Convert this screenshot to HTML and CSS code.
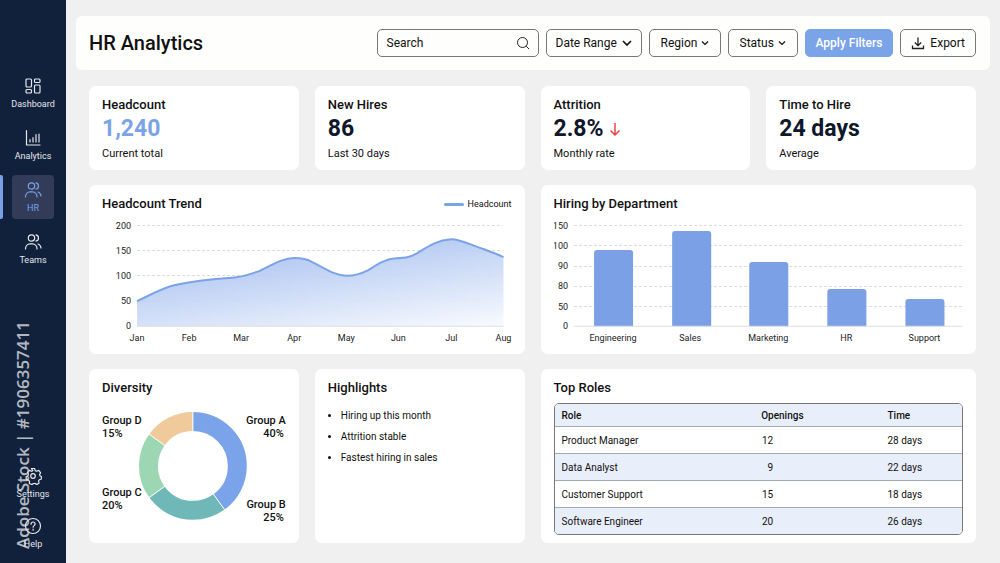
FILE: index.html
```html
<!DOCTYPE html>
<html lang="en">
<head>
  <meta charset="UTF-8">
  <meta name="viewport" content="width=device-width, initial-scale=1.0">
  <title>HR Analytics</title>
  <link rel="stylesheet" href="styles.css">
</head>
<body>
  <!-- Sidebar -->
  <nav class="sidebar">
    <a class="nav-item" href="#dashboard">
      <svg class="nav-icon" viewBox="0 0 18 18"><rect x="2" y="2" width="5.5" height="8" rx="1"/><rect x="2" y="12.5" width="5.5" height="3.5" rx="1"/><rect x="10.5" y="2" width="5.5" height="3.5" rx="1"/><rect x="10.5" y="8" width="5.5" height="8" rx="1"/></svg>
      <span>Dashboard</span>
    </a>
    <a class="nav-item" href="#analytics">
      <svg class="nav-icon" viewBox="0 0 18 18"><path d="M2.5 1.5V16H16M6 13v-2.5M9 13V8.5M12 13V5.5M15 13V5"/></svg>
      <span>Analytics</span>
    </a>
    <a class="nav-item active" href="#hr">
      <svg class="nav-icon" viewBox="0 0 18 18"><circle cx="7.5" cy="5" r="3.2"/><path d="M1.5 16c0-3 2-5.2 4.500-5.200h2.500c2.500 0 4.500 2.200 4.500 5.200M12 1.800a3.300 3.300 0 0 1 0 6.400M14 11c1.800.6 2.800 2 3 4"/></svg>
      <span>HR</span>
    </a>
    <a class="nav-item" href="#teams">
      <svg class="nav-icon" viewBox="0 0 18 18"><circle cx="7.5" cy="5" r="3.2"/><path d="M1.5 16c0-3 2-5.2 4.500-5.200h2.500c2.500 0 4.500 2.200 4.500 5.200M12 1.800a3.300 3.300 0 0 1 0 6.400M14 11c1.800.6 2.800 2 3 4"/></svg>
      <span>Teams</span>
    </a>
    <div class="nav-bottom">
      <a class="nav-item" href="#settings">
        <svg class="nav-icon" viewBox="0 0 18 18"><circle cx="9" cy="9" r="2.3"/><path d="M7.400 1.500h3.200l.6 2.100 1.500.7 2-.9 1.900 2.200-1 1.900.5 1.500 1.400.5-.3 2.700-2 .6-.7 1.300.6 2-2.300 1.500-1.700-1.200-1.600.1-1.500 1.100-2.700-1.100.2-2.100-1-1.300-2.200-.4-.2-2.800 1.900-1 .4-1.500-.9-2 2.100-2 1.900.9 1.300-.7z"/></svg>
        <span>Settings</span>
      </a>
      <a class="nav-item" href="#help">
        <svg class="nav-icon" viewBox="0 0 18 18"><circle cx="9" cy="9" r="7.500"/><path d="M7 7.200C7 5.800 7.900 5 9.100 5s2 .8 2 2c0 1.500-2 1.700-2 3.200M9.100 12.200v1"/></svg>
        <span>Help</span>
      </a>
    </div>
    <span class="stock-tag">Adobe Stock | #1906357411</span>
  </nav>

  <main class="main">
    <!-- Header and filters -->
    <header class="topbar">
      <h1>HR Analytics</h1>
      <div class="filters">
        <div class="search-box">
          <input type="text" class="search-input" placeholder="Search" aria-label="Search">
          <svg class="search-icon" viewBox="0 0 14 14"><circle cx="6.500" cy="6.500" r="5"/><path d="M10.200 10.200L13 13"/></svg>
        </div>
        <select class="filter-select filter-date" aria-label="Date Range"><option>Date Range</option></select>
        <select class="filter-select" aria-label="Region"><option>Region</option></select>
        <select class="filter-select" aria-label="Status"><option>Status</option></select>
        <button class="apply-button">Apply Filters</button>
        <button class="export-button">
          <svg class="export-icon" viewBox="0 0 14 14"><path d="M7 1.500v8M3.800 6.500L7 9.700l3.200-3.200M1.500 9.500v3h11v-3"/></svg>
          Export
        </button>
      </div>
    </header>

    <div class="grid">
      <!-- KPI cards -->
      <section class="card kpi">
        <h2>Headcount</h2>
        <p class="kpi-value kpi-blue">1,240</p>
        <p class="kpi-note">Current total</p>
      </section>
      <section class="card kpi">
        <h2>New Hires</h2>
        <p class="kpi-value">86</p>
        <p class="kpi-note">Last 30 days</p>
      </section>
      <section class="card kpi">
        <h2>Attrition</h2>
        <p class="kpi-value">2.8% <svg class="down-icon" viewBox="0 0 12 14"><path d="M6 1v12M1.500 8.500L6 13l4.500-4.500"/></svg></p>
        <p class="kpi-note">Monthly rate</p>
      </section>
      <section class="card kpi">
        <h2>Time to Hire</h2>
        <p class="kpi-value">24 days</p>
        <p class="kpi-note">Average</p>
      </section>

      <!-- Headcount trend -->
      <section class="card wide">
        <div class="card-head">
          <h2>Headcount Trend</h2>
          <span class="legend">Headcount</span>
        </div>
        <svg class="chart" viewBox="0 0 409 132">
          <defs>
            <linearGradient id="areaFill" x1="0.3" y1="0.1" x2="0.9" y2="1.1">
              <stop offset="0" stop-color="#a3bdef"/>
              <stop offset="1" stop-color="#fafcff"/>
            </linearGradient>
          </defs>
          <path class="grid-line" d="M35 11H401M35 36H401M35 61H401M35 86H401"/>
          <path fill="url(#areaFill)" fill-opacity="0.9" d="M35 87C48 81 60 74 73 71C92 67 112 65 126 64C136 63.500 146 61 157 57C170 51 180 44 192 44C198 44 204 44.500 210 48C222 54 231 61 244 61.700C253 62 260 59 266 56C274 51 282 45 294 44.300C304 44 308 43 315 39C326 32 335 26 349 25.300C357 25 371 32 381 35C388 38 395 40 401 43V112H35Z"/>
          <path class="trend-line" d="M35 87C48 81 60 74 73 71C92 67 112 65 126 64C136 63.500 146 61 157 57C170 51 180 44 192 44C198 44 204 44.500 210 48C222 54 231 61 244 61.700C253 62 260 59 266 56C274 51 282 45 294 44.300C304 44 308 43 315 39C326 32 335 26 349 25.300C357 25 371 32 381 35C388 38 395 40 401 43"/>
          <path class="base-line" d="M35 112H401"/>
          <g class="axis-y">
            <text x="29" y="15">200</text>
            <text x="29" y="40">150</text>
            <text x="29" y="65">100</text>
            <text x="29" y="90">50</text>
            <text x="29" y="115">0</text>
          </g>
          <g class="axis-x">
            <text x="35" y="127">Jan</text>
            <text x="87" y="127">Feb</text>
            <text x="139" y="127">Mar</text>
            <text x="192" y="127">Apr</text>
            <text x="244" y="127">May</text>
            <text x="296" y="127">Jun</text>
            <text x="349" y="127">Jul</text>
            <text x="401" y="127">Aug</text>
          </g>
        </svg>
      </section>

      <!-- Hiring by department -->
      <section class="card wide">
        <div class="card-head">
          <h2>Hiring by Department</h2>
        </div>
        <svg class="chart" viewBox="0 0 409 132">
          <path class="grid-line" d="M20 11H408M20 31H408M20 52H408M20 72H408M20 92H408"/>
          <g class="bars">
            <path d="M40 112V39q0-3 3-3h33q3 0 3 3v73z"/>
            <path d="M118 112V20q0-3 3-3h33q3 0 3 3v92z"/>
            <path d="M195 112V51q0-3 3-3h33q3 0 3 3v61z"/>
            <path d="M273 112V78q0-3 3-3h33q3 0 3 3v34z"/>
            <path d="M351 112V88q0-3 3-3h33q3 0 3 3v24z"/>
          </g>
          <path class="base-line" d="M20 112H408"/>
          <g class="axis-y">
            <text x="14" y="15">150</text>
            <text x="14" y="35">100</text>
            <text x="14" y="55">90</text>
            <text x="14" y="75">80</text>
            <text x="14" y="96">50</text>
            <text x="14" y="115">0</text>
          </g>
          <g class="axis-x">
            <text x="59" y="127">Engineering</text>
            <text x="136" y="127">Sales</text>
            <text x="214" y="127">Marketing</text>
            <text x="292" y="127">HR</text>
            <text x="370" y="127">Support</text>
          </g>
        </svg>
      </section>

      <!-- Diversity -->
      <section class="card">
        <h2>Diversity</h2>
        <svg class="donut" viewBox="0 0 184 124">
          <g class="slices" transform="rotate(-90 91 62)">
            <circle class="slice-a" cx="91" cy="62" r="44.500" pathLength="100" stroke-dasharray="40 60"/>
            <circle class="slice-b" cx="91" cy="62" r="44.500" pathLength="100" stroke-dasharray="25 75" stroke-dashoffset="-40"/>
            <circle class="slice-c" cx="91" cy="62" r="44.500" pathLength="100" stroke-dasharray="20 80" stroke-dashoffset="-65"/>
            <circle class="slice-d" cx="91" cy="62" r="44.500" pathLength="100" stroke-dasharray="15 85" stroke-dashoffset="-85"/>
          </g>
          <path class="slice-gap" d="M91 62V7M91 62L123.300 106.500M91 62L46.500 94.300M91 62L46.500 29.700"/>
          <g class="slice-label">
            <text x="0" y="20">Group D</text>
            <text x="0" y="33">15%</text>
            <text x="0" y="92">Group C</text>
            <text x="0" y="105">20%</text>
          </g>
          <g class="slice-label slice-label-right">
            <text x="184" y="20">Group A</text>
            <text x="182" y="33">40%</text>
            <text x="184" y="104">Group B</text>
            <text x="182" y="117">25%</text>
          </g>
        </svg>
      </section>

      <!-- Highlights -->
      <section class="card">
        <h2>Highlights</h2>
        <ul class="highlights">
          <li>Hiring up this month</li>
          <li>Attrition stable</li>
          <li>Fastest hiring in sales</li>
        </ul>
      </section>

      <!-- Top roles -->
      <section class="card wide">
        <h2>Top Roles</h2>
        <table class="roles">
          <thead>
            <tr><th class="col-role">Role</th><th class="col-openings">Openings</th><th>Time</th></tr>
          </thead>
          <tbody>
            <tr><td>Product Manager</td><td><span class="count">12</span></td><td>28 days</td></tr>
            <tr><td>Data Analyst</td><td><span class="count">9</span></td><td>22 days</td></tr>
            <tr><td>Customer Support</td><td><span class="count">15</span></td><td>18 days</td></tr>
            <tr><td>Software Engineer</td><td><span class="count">20</span></td><td>26 days</td></tr>
          </tbody>
        </table>
      </section>
    </div>
  </main>
</body>
</html>
```
FILE: styles.css
```css
/* General Styles */
* {
  box-sizing: border-box;
}

body {
  display: flex;
  min-height: 100vh;
  margin: 0;
  background-color: #f0f0f0;
  color: #111111;
  font-family: Roboto, Arial, sans-serif;
  font-size: 11px;
}

h1, h2, p, ul {
  margin: 0;
}

h1 {
  font-size: 20px;
  font-weight: 500;
}

h2 {
  font-size: 13px;
  line-height: 14px;
  font-weight: 500;
}

/* Sidebar */
.sidebar {
  position: relative;
  display: flex;
  flex-direction: column;
  align-items: center;
  gap: 8px;
  flex: none;
  width: 66px;
  padding: 71px 0 8px;
  background-color: #11213c;
}

.nav-item {
  display: flex;
  flex-direction: column;
  align-items: center;
  gap: 3px;
  min-width: 42px;
  height: 44px;
  padding-top: 6px;
  border-radius: 4px;
  color: #e4e7ec;
  font-size: 9px;
  line-height: 12px;
  text-decoration: none;
}

.nav-item.active {
  background-color: #323c58;
  color: #7ba0e8;
}

/* Marker on the window edge beside the active item */
.nav-item.active::before {
  content: "";
  position: absolute;
  left: 0;
  width: 3px;
  height: 44px;
  margin-top: -6px;
  background-color: #7ba0e8;
  border-radius: 0 2px 2px 0;
}

.nav-icon {
  width: 18px;
  height: 18px;
  fill: none;
  stroke: currentColor;
  stroke-width: 1.2;
  stroke-linecap: round;
  stroke-linejoin: round;
}

.nav-bottom {
  display: flex;
  flex-direction: column;
  gap: 6px;
  margin-top: auto;
}

.stock-tag {
  position: absolute;
  left: 12px;
  bottom: 14px;
  color: rgba(225, 227, 230, 0.8);
  font-family: "Open Sans", "Noto Sans", sans-serif;
  font-size: 17px;
  font-weight: 600;
  line-height: 22px;
  white-space: nowrap;
  writing-mode: vertical-rl;
  transform: rotate(180deg);
  pointer-events: none;
}

/* Header */
.main {
  flex: 1;
  min-width: 0;
  padding: 16px 10px 16px;
}

.topbar {
  display: flex;
  align-items: center;
  justify-content: space-between;
  padding: 13px 14px 13px 13px;
  background-color: #fefefc;
  border-radius: 6px;
}

.filters {
  display: flex;
  gap: 7px;
}

.search-box,
.filter-select,
.export-button,
.apply-button {
  height: 28px;
  border: 1px solid #777777;
  border-radius: 5px;
  background-color: #fefefc;
  color: #111111;
  font-family: inherit;
  font-size: 12px;
}

.search-box {
  display: flex;
  align-items: center;
  width: 162px;
  padding: 0 8px 0 9px;
}

.search-input {
  flex: 1;
  min-width: 0;
  padding: 0;
  border: none;
  outline: none;
  background: none;
  font: inherit;
}

.search-input::placeholder {
  color: #111111;
}

.search-icon,
.export-icon {
  width: 14px;
  height: 14px;
  fill: none;
  stroke: #222222;
}

.export-icon {
  stroke-width: 1.3;
}

.filter-select {
  appearance: none;
  padding: 0 22px 0 11px;
  background-image: url("data:image/svg+xml,%3Csvg xmlns='http://www.w3.org/2000/svg' width='8' height='8' fill='none' stroke='%23111' stroke-width='1.2'%3E%3Cpath d='M1 2.500l3 3 3-3'/%3E%3C/svg%3E");
  background-repeat: no-repeat;
  background-position: right 11px center;
}

.filter-date {
  padding: 0 23px 0 9px;
  background-image: url("data:image/svg+xml,%3Csvg xmlns='http://www.w3.org/2000/svg' width='10' height='8' fill='none' stroke='%23111' stroke-width='1.600'%3E%3Cpath d='M1 2l4 4 4-4'/%3E%3C/svg%3E");
  background-position: right 9px center;
}

.apply-button {
  padding: 0 10px;
  border-color: #7ba3e8;
  background-color: #7ba3e8;
  color: #ffffff;
  font-weight: 500;
  cursor: pointer;
}

.export-button {
  display: flex;
  align-items: center;
  gap: 5px;
  padding: 0 10px;
  cursor: pointer;
}

/* Cards */
.grid {
  display: grid;
  grid-template-columns: repeat(4, 1fr);
  gap: 15px 16px;
  padding: 16px 14px 0 13px;
}

.card {
  min-width: 0;
  padding: 12px 13px 8px;
  background-color: #ffffff;
  border-radius: 7px;
}

.wide {
  grid-column: span 2;
}

.card-head {
  display: flex;
  align-items: center;
  justify-content: space-between;
}

.kpi {
  padding-bottom: 9px;
}

.kpi-value {
  margin: 3px 0 4px;
  color: #0f172a;
  font-size: 23px;
  font-weight: 700;
  line-height: 28px;
}

.kpi-blue {
  color: #7ba3e8;
}

.kpi-note {
  line-height: 14px;
}

.down-icon {
  width: 12px;
  height: 14px;
  fill: none;
  stroke: #ef4444;
  stroke-width: 1.5;
}

/* Charts */
.legend {
  display: flex;
  align-items: center;
  gap: 4px;
  font-size: 9px;
}

.legend::before {
  content: "";
  width: 20px;
  height: 3px;
  border-radius: 2px;
  background-color: #7ba3e8;
}

.chart {
  display: block;
  width: 100%;
  margin-top: 3px;
}

.chart text {
  fill: #222222;
  font-size: 9px;
}

.axis-y {
  text-anchor: end;
}

.axis-x {
  text-anchor: middle;
}

.grid-line {
  stroke: #dddddd;
  stroke-dasharray: 3 2;
  shape-rendering: crispEdges;
}

.base-line {
  stroke: #dcdee2;
}

.trend-line {
  fill: none;
  stroke: #7ba3e8;
  stroke-width: 2;
}

.bars {
  fill: #7ba0e6;
}

.donut {
  display: block;
  width: 100%;
  margin: 9px 0 5px;
}

.slices circle {
  fill: none;
  stroke-width: 19;
}

.slices .slice-a {
  stroke: #7ba3e9;
}

.slices .slice-b {
  stroke: #70b8b7;
}

.slices .slice-c {
  stroke: #9dd6b2;
}

.slices .slice-d {
  stroke: #f0ca9a;
}

.slice-gap {
  stroke: #ffffff;
}

.slice-label {
  font-size: 11px;
  font-weight: 500;
  fill: #111111;
}

.slice-label-right {
  text-anchor: end;
}

/* Highlights */
.highlights {
  margin-top: 10px;
  padding-left: 13px;
  font-size: 10px;
  line-height: 21px;
}

/* Top Roles Table */
.roles {
  width: 100%;
  margin-top: 8px;
  border: 1px solid #777777;
  border-radius: 5px;
  border-spacing: 0;
  table-layout: fixed;
  overflow: hidden;
}

.roles th,
.roles td {
  height: 27px;
  padding: 0 7px;
  font-size: 10px;
  text-align: left;
}

.roles th {
  height: 22px;
  font-weight: 500;
  background-color: #e9eefb;
}

.roles td {
  border-top: 1px solid #a4a9b8;
}

.roles tbody tr:nth-child(even) {
  background-color: #e9eefb;
}

.col-role {
  width: 49%;
}

.col-openings {
  width: 31%;
}

/* Keeps one and two digit counts aligned on the right */
.count {
  display: inline-block;
  min-width: 12px;
  text-align: right;
}
```
